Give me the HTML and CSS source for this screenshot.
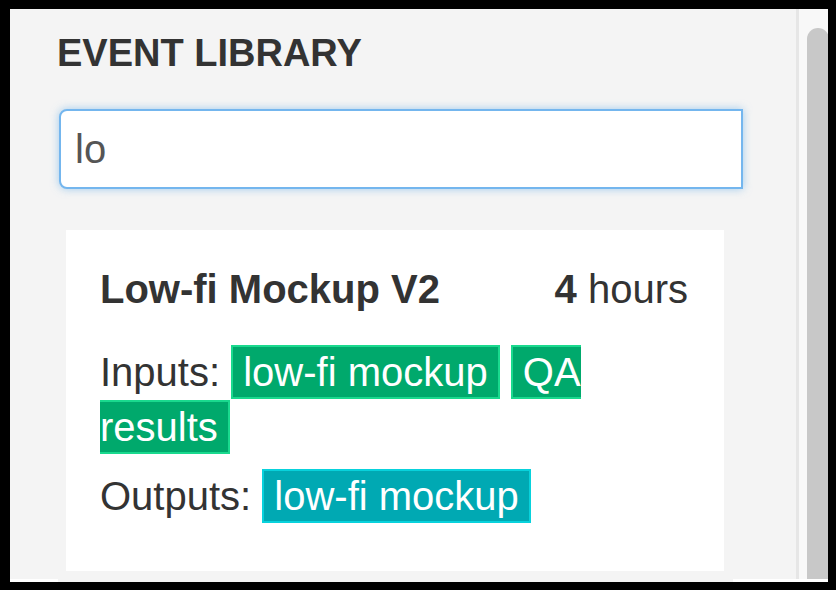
FILE: index.html
```html
<!DOCTYPE html>
<html>
<head>
<meta charset="utf-8">
<link rel="stylesheet" href="styles.css">
</head>
<body>
<div class="frame">
  <div class="top">
    <div class="main">
      <h1 class="heading">EVENT LIBRARY</h1>
      <input class="search" type="text" value="lo">
      <div class="card">
        <div class="card-head">
          <span class="title">Low-fi Mockup V2</span>
          <span class="duration"><b>4</b> hours</span>
        </div>
        <p class="row">Inputs: <span class="tag tag-in">low-fi mockup</span> <span class="tag tag-in">QA results</span></p>
        <p class="row row-out">Outputs: <span class="tag tag-out">low-fi mockup</span></p>
      </div>
    </div>
    <div class="gutter"></div>
    <div class="track"><div class="thumb"></div></div>
  </div>
  <div class="bottom">
    <div class="seg-white seg-left"></div>
    <div class="seg-gray"></div>
    <div class="seg-white seg-right"></div>
  </div>
</div>
</body>
</html>
```

FILE: styles.css
```css
html, body {
  margin: 0;
  padding: 0;
  background: #000;
}
body {
  width: 836px;
  height: 590px;
  overflow: hidden;
  font-family: "Liberation Sans", Arial, sans-serif;
  color: #333;
}
.frame {
  margin: 9px 0 0 10px;
  width: 818px;
  height: 573px;
  overflow: hidden;
  display: flex;
  flex-direction: column;
  background: #f4f4f4;
}
.top {
  flex: 1;
  display: flex;
  min-height: 0;
}
.main {
  width: 786px;
  padding: 25px 0 0 49px;
  box-sizing: border-box;
  background: #f4f4f4;
}
.heading {
  margin: 0 0 0 -2px;
  font-size: 38px;
  line-height: 38px;
  font-weight: bold;
  color: #333;
}
.search {
  display: block;
  margin: 37px 0 0 0;
  width: 684px;
  height: 80px;
  box-sizing: border-box;
  border: 2px solid #74b6ee;
  border-radius: 8px 0 0 8px;
  box-shadow: 0 0 8px rgba(102, 175, 233, 0.6);
  padding: 0 14px;
  font-family: "Liberation Sans", Arial, sans-serif;
  font-size: 40px;
  color: #555;
  background: #fff;
  outline: none;
}
.card {
  margin: 41px 0 0 7px;
  width: 658px;
  box-sizing: border-box;
  background: #fff;
  padding: 32px 36px 47px 34px;
  font-size: 40px;
  line-height: 55px;
}
.card-head {
  display: flex;
  justify-content: space-between;
}
.title {
  font-weight: bold;
}
.row {
  margin: 28px 0 0 0;
}
.row-out {
  margin-top: 14px;
}
.tag {
  color: #fff;
  padding: 3px 10px;
  border: 2px solid;
}
.tag-in {
  background: #00a96c;
  border-color: #1ad98e;
}
.tag-out {
  background: #00a9b3;
  border-color: #08d2dc;
}
.gutter {
  width: 3px;
  background: #e6e6e6;
}
.track {
  width: 29px;
  background: #f8f8f8;
  padding: 19px 0 0 8px;
  box-sizing: border-box;
}
.thumb {
  width: 22px;
  height: 100%;
  background: #c8c8c8;
  border-radius: 11px 11px 0 0;
}
.bottom {
  height: 3px;
  display: flex;
}
.seg-white {
  background: #fff;
}
.seg-left {
  width: 48px;
}
.seg-gray {
  flex: 1;
  background: #f4f4f4;
}
.seg-right {
  width: 95px;
}
```
